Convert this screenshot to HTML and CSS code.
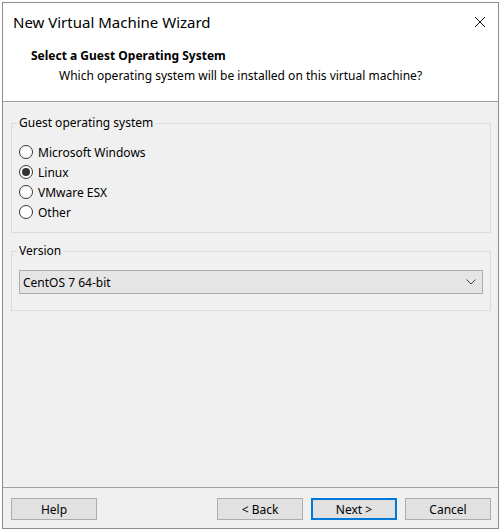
FILE: index.html
```html
<!DOCTYPE html>
<html lang="en">
<head>
  <meta charset="UTF-8" />
  <title>New Virtual Machine Wizard</title>
  <link rel="stylesheet" href="styles.css">
</head>
<body>

  <div class="window">
    <div class="top">
      <div class="titlebar">
        <span class="title">New Virtual Machine Wizard</span>
        <svg class="close" width="12" height="12" viewBox="0 0 12 12">
          <path d="M1 1 L11 11 M11 1 L1 11" stroke="#111" stroke-width="1" fill="none"/>
        </svg>
      </div>
      <div class="header">
        <div class="heading">Select a Guest Operating System</div>
        <div class="subheading">Which operating system will be installed on this virtual machine?</div>
      </div>
    </div>

    <div class="main">
      <fieldset class="group">
        <legend>Guest operating system</legend>
        <div class="radio"><span class="dot"></span>Microsoft Windows</div>
        <div class="radio checked"><span class="dot"></span>Linux</div>
        <div class="radio"><span class="dot"></span>VMware ESX</div>
        <div class="radio"><span class="dot"></span>Other</div>
      </fieldset>

      <fieldset class="group version">
        <legend>Version</legend>
        <div class="select">
          <span>CentOS 7 64-bit</span>
          <svg width="10" height="6" viewBox="0 0 10 6">
            <path d="M0.5 0.5 L5 5 L9.5 0.5" stroke="#444" stroke-width="1" fill="none"/>
          </svg>
        </div>
      </fieldset>
    </div>

    <div class="footer">
      <button class="btn">Help</button>
      <div class="spacer"></div>
      <button class="btn">&lt; Back</button>
      <button class="btn default">Next &gt;</button>
      <button class="btn">Cancel</button>
    </div>
  </div>

</body>
</html>
```

FILE: styles.css
```css
body {
  margin: 0;
  background: #fff;
  font-family: "Noto Sans", "Open Sans", sans-serif;
  font-size: 12px;
  color: #000;
}
.window {
  margin: 2px 0 0 2px;
  width: 497px;
  height: 527px;
  box-sizing: border-box;
  border: 1px solid #8c8c8c;
  background: #f0f0f0;
  display: flex;
  flex-direction: column;
}
.top {
  background: #fff;
  height: 98px;
  border-bottom: 1px solid #a0a0a0;
}
.titlebar {
  height: 38px;
  padding: 0 12px 0 10px;
  display: flex;
  align-items: center;
  justify-content: space-between;
}
.title {
  font-size: 15px;
}
.header {
  padding-top: 5px;
  line-height: 20px;
}
.heading {
  font-weight: bold;
  padding-left: 28px;
}
.subheading {
  padding-left: 56px;
}
.main {
  flex: 1;
  padding-top: 13px;
}
.group {
  margin: 0 7px 0 8px;
  padding: 11px 7px 10px 7px;
  border: 1px solid #dcdcdc;
}
.group legend {
  padding: 0 2px;
  margin-left: -2px;
  line-height: 16px;
}
.radio {
  height: 20px;
  display: flex;
  align-items: center;
}
.dot {
  width: 14px;
  height: 14px;
  box-sizing: border-box;
  border: 1px solid #333;
  border-radius: 50%;
  background: #fff;
  margin-right: 5px;
  display: flex;
  align-items: center;
  justify-content: center;
}
.checked .dot::after {
  content: "";
  width: 8px;
  height: 8px;
  border-radius: 50%;
  background: #333;
}
.version {
  margin-top: 10px;
  padding-top: 11px;
  padding-bottom: 16px;
}
.select {
  height: 24px;
  box-sizing: border-box;
  border: 1px solid #adadad;
  background: #e5e5e5;
  padding: 0 6px 0 3px;
  display: flex;
  align-items: center;
  justify-content: space-between;
}
.footer {
  height: 41px;
  border-top: 1px solid #a0a0a0;
  padding: 10px 7px 0 8px;
  box-sizing: border-box;
  display: flex;
  align-items: flex-start;
  gap: 8px;
}
.spacer {
  flex: 1;
}
.btn {
  width: 86px;
  height: 22px;
  border: 1px solid #adadad;
  background: #e1e1e1;
  font-family: "Noto Sans", "Open Sans", sans-serif;
  font-size: 12px;
  color: #000;
  padding: 0;
}
.btn.default {
  border: 2px solid #0078d7;
}
```
